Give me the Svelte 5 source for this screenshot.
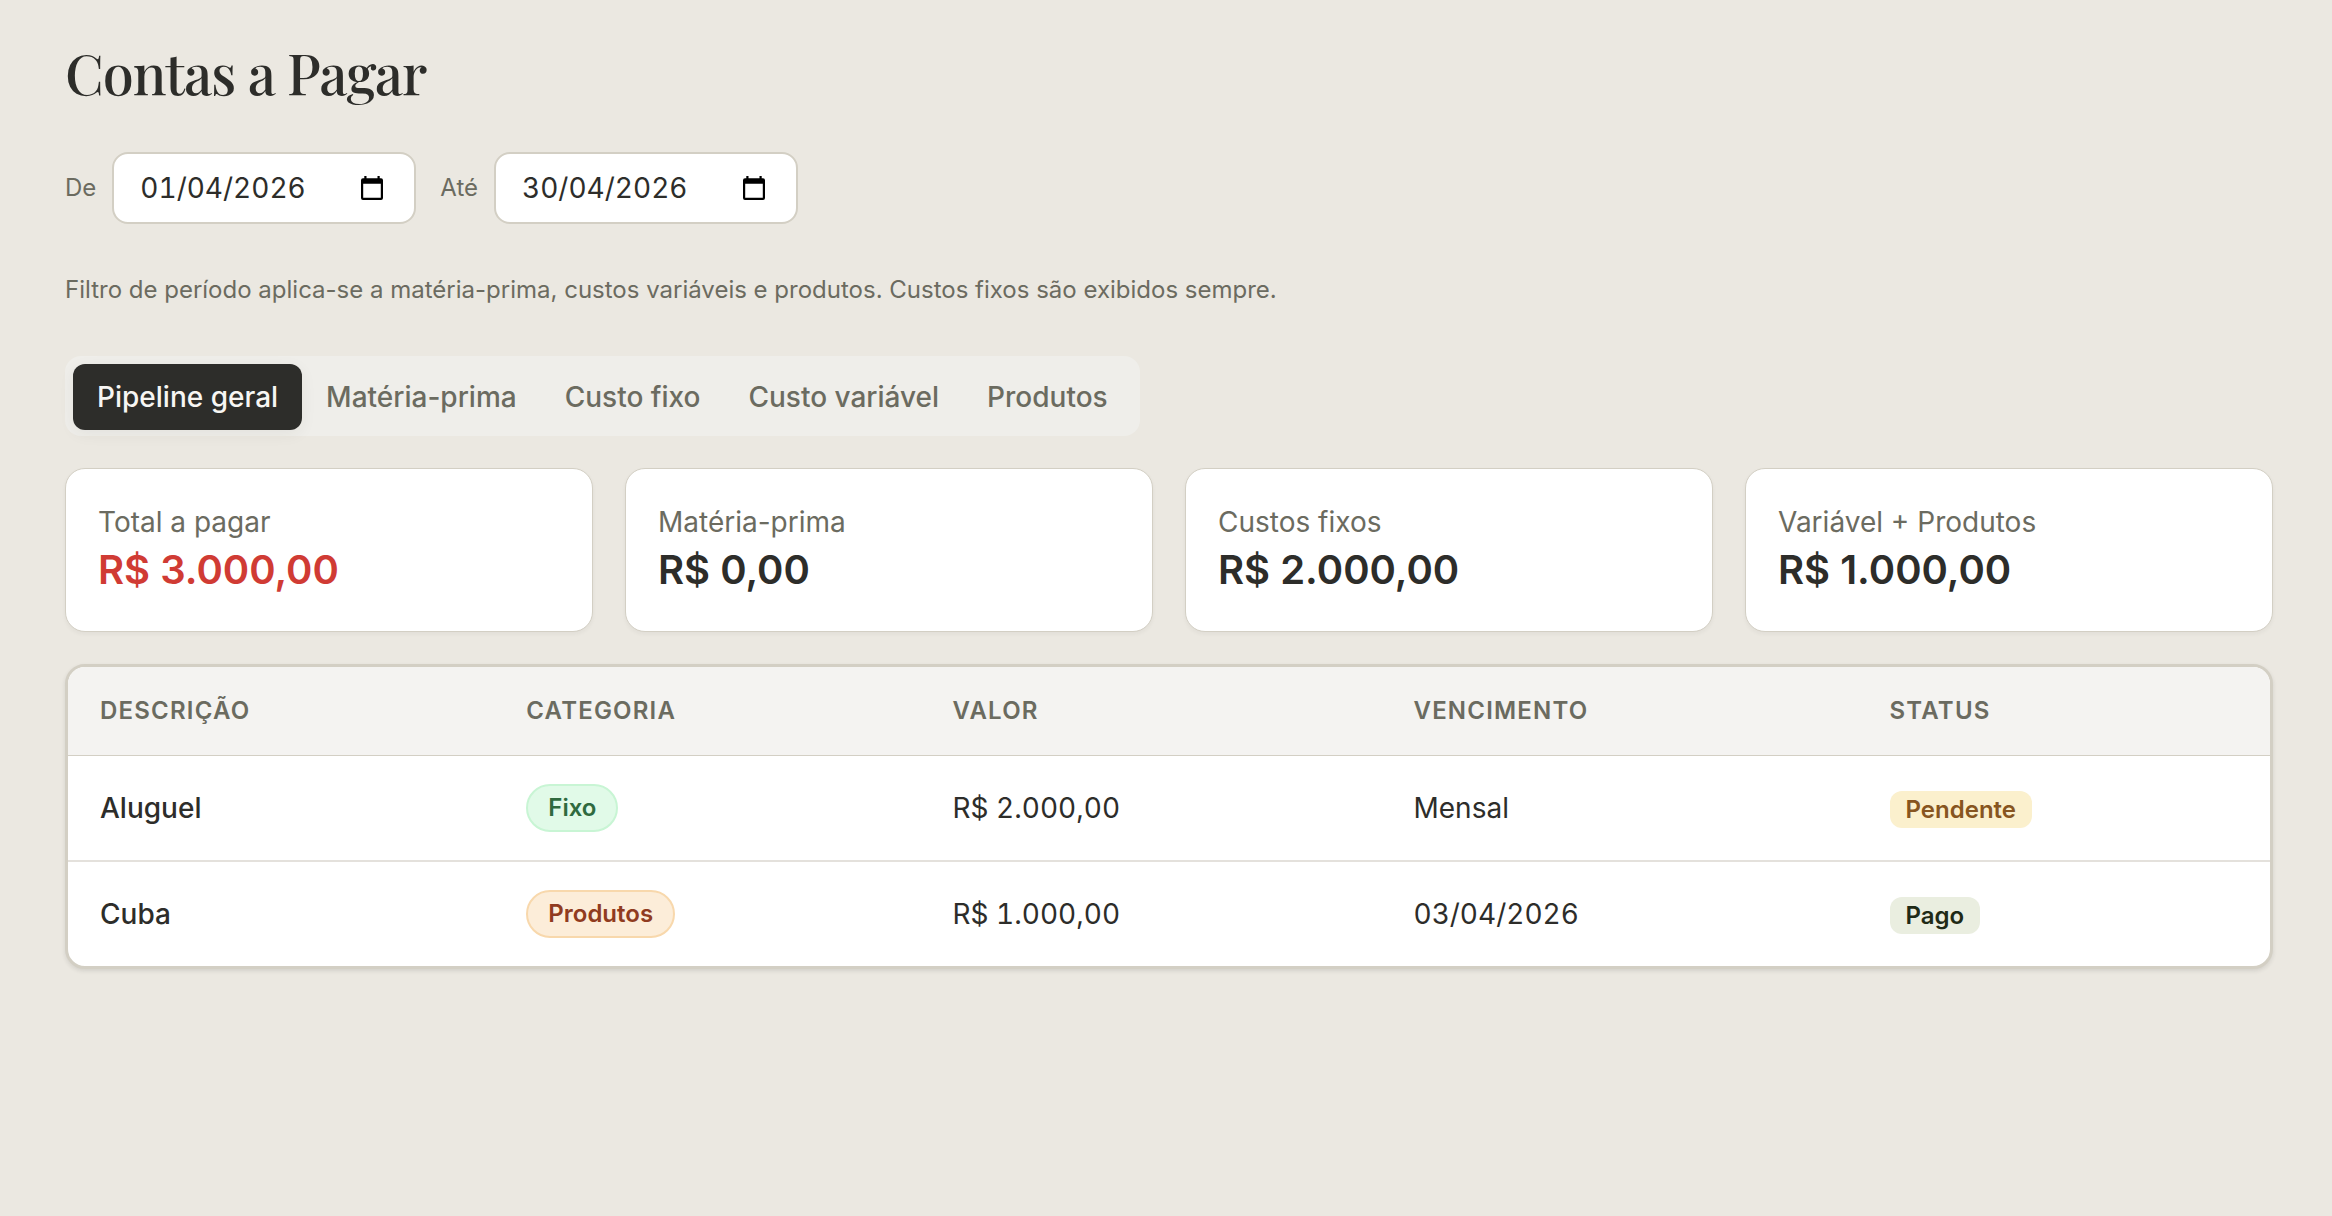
<script lang="ts">
	type Row = {
		description: string;
		category: string;
		categoryClass: string;
		value: string;
		due: string;
		status: string;
		statusClass: string;
	};

	const tabs = [
		"Pipeline geral",
		"Matéria-prima",
		"Custo fixo",
		"Custo variável",
		"Produtos",
	];

	const summary = [
		{ label: "Total a pagar", value: "R$ 3.000,00", danger: true },
		{ label: "Matéria-prima", value: "R$ 0,00", danger: false },
		{ label: "Custos fixos", value: "R$ 2.000,00", danger: false },
		{ label: "Variável + Produtos", value: "R$ 1.000,00", danger: false },
	];

	const rows: Row[] = [
		{
			description: "Aluguel",
			category: "Fixo",
			categoryClass: "fixed",
			value: "R$ 2.000,00",
			due: "Mensal",
			status: "Pendente",
			statusClass: "pending",
		},
		{
			description: "Cuba",
			category: "Produtos",
			categoryClass: "products",
			value: "R$ 1.000,00",
			due: "03/04/2026",
			status: "Pago",
			statusClass: "paid",
		},
	];

	let activeTab = $state("Pipeline geral");
	let from = $state("01/04/2026");
	let to = $state("30/04/2026");
</script>

{#snippet calendarIcon()}
	<svg width="22" height="24" viewBox="0 0 22 24" aria-hidden="true">
		<path
			fill="#000"
			fill-rule="evenodd"
			d="M3.3 0h2.2v2.3h11V0h2.2v2.3H20a2 2 0 0 1 2 2V22a2 2 0 0 1-2 2H2a2 2 0 0 1-2-2V4.300a2 2 0 0 1 2-2h1.300zM2.200 7.700v14.100h17.600V7.700z"
		/>
	</svg>
{/snippet}

<main class="page">
	<h1>Contas a Pagar</h1>

	<div class="period">
		<div class="field">
			<label for="from">De</label>
			<div class="date">
				<input id="from" type="text" inputmode="numeric" bind:value={from} />
				<button type="button" aria-label="Abrir calendário">
					{@render calendarIcon()}
				</button>
			</div>
		</div>
		<div class="field">
			<label for="to">Até</label>
			<div class="date">
				<input id="to" type="text" inputmode="numeric" bind:value={to} />
				<button type="button" aria-label="Abrir calendário">
					{@render calendarIcon()}
				</button>
			</div>
		</div>
	</div>

	<p class="hint">
		Filtro de período aplica-se a matéria-prima, custos variáveis e produtos.
		Custos fixos são exibidos sempre.
	</p>

	<div class="tabs" role="tablist">
		{#each tabs as tab}
			<button
				type="button"
				role="tab"
				class:active={tab === activeTab}
				aria-selected={tab === activeTab}
				onclick={() => (activeTab = tab)}
			>
				{tab}
			</button>
		{/each}
	</div>

	<section class="cards">
		{#each summary as card}
			<div class="card">
				<span class="card-label">{card.label}</span>
				<strong class:danger={card.danger}>{card.value}</strong>
			</div>
		{/each}
	</section>

	<div class="table-wrap">
		<table>
			<thead>
				<tr>
					<th class="col-description">Descrição</th>
					<th class="col-category">Categoria</th>
					<th class="col-value">Valor</th>
					<th class="col-due">Vencimento</th>
					<th class="col-status">Status</th>
				</tr>
			</thead>
			<tbody>
				{#each rows as row}
					<tr>
						<td class="name">{row.description}</td>
						<td><span class="pill {row.categoryClass}">{row.category}</span></td>
						<td class="number">{row.value}</td>
						<td class="number">{row.due}</td>
						<td><span class="status {row.statusClass}">{row.status}</span></td>
					</tr>
				{/each}
			</tbody>
		</table>
	</div>
</main>

<style>
	:global(body) {
		margin: 0;
		background: #ebe8e1;
	}

	.page {
		box-sizing: border-box;
		padding: 36px 59px 40px 65px;
		font-family: Inter, "Liberation Sans", sans-serif;
		font-size: 28px;
		line-height: 40px;
		color: #2d2d2a;
	}

	h1 {
		margin: 0 0 44px;
		font-family: "Playfair Display", "Liberation Serif", serif;
		font-size: 56px;
		line-height: 72px;
		font-weight: 500;
		letter-spacing: -0.02em;
	}

	button,
	input {
		font: inherit;
		color: inherit;
		border: 0;
		margin: 0;
		padding: 0;
		background: none;
	}

	.period {
		display: flex;
		flex-wrap: wrap;
		gap: 24px;
	}

	.field {
		display: flex;
		align-items: center;
		gap: 16px;
	}

	label {
		font-size: 24px;
		line-height: 32px;
		color: #6b6b60;
	}

	.date {
		box-sizing: border-box;
		display: flex;
		align-items: center;
		width: 304px;
		height: 72px;
		padding: 0 31px 0 26px;
		border: 2px solid #d3cfc4;
		border-radius: 16px;
		background: #fff;
	}

	.date input {
		flex: 1;
		min-width: 0;
		font-variant-numeric: tabular-nums;
		outline: none;
	}

	.date button {
		display: flex;
		cursor: pointer;
	}

	.hint {
		margin: 48px 0;
		font-size: 24px;
		line-height: 36px;
		color: #6b6b60;
	}

	.tabs {
		display: flex;
		align-items: flex-start;
		width: fit-content;
		padding: 8px 8px 6px;
		border-radius: 16px;
		background: #efeeea;
	}

	.tabs button {
		padding: 13px 24px;
		border-radius: 12px;
		font-weight: 500;
		color: #6b6b60;
		cursor: pointer;
	}

	.tabs .active {
		background: #2d2d2a;
		color: #f7f6f3;
		box-shadow: 0 4px 16px rgba(45, 45, 42, 0.06);
	}

	.cards {
		display: grid;
		grid-template-columns: repeat(4, 1fr);
		gap: 32px;
		margin: 32px 0;
	}

	.card {
		display: flex;
		flex-direction: column;
		padding: 33px 32px;
		border: 1px solid #d3cfc4;
		border-radius: 20px;
		background: #fff;
		box-shadow: 0 2px 4px rgba(45, 45, 42, 0.05);
	}

	.card-label {
		color: #6b6b60;
	}

	.card strong {
		font-size: 40px;
		line-height: 56px;
		font-weight: 600;
	}

	.card .danger {
		color: #d03b34;
	}

	.table-wrap {
		overflow: hidden;
		border: 3px solid #d3cfc4;
		border-radius: 20px;
		background: #fff;
		box-shadow: 0 2px 4px rgba(45, 45, 42, 0.12);
	}

	table {
		width: 100%;
		table-layout: fixed;
		border-collapse: separate;
		border-spacing: 0;
	}

	th,
	td {
		box-sizing: border-box;
		padding: 0 32px;
		text-align: left;
		vertical-align: middle;
	}

	th {
		height: 89px;
		border-bottom: 1px solid #d3cfc4;
		background: #f4f3f1;
		font-size: 24px;
		line-height: 32px;
		font-weight: 600;
		letter-spacing: 0.05em;
		text-transform: uppercase;
		color: #6b6b60;
	}

	.col-description,
	.col-category {
		width: 19.36%;
	}

	.col-value {
		width: 20.93%;
	}

	.col-due {
		width: 21.62%;
	}

	td {
		height: 104px;
	}

	tbody tr:not(:last-child) td {
		height: 106px;
		border-bottom: 2px solid #e4e1dc;
	}

	.name {
		font-weight: 500;
	}

	.number {
		font-variant-numeric: tabular-nums;
	}

	.pill,
	.status {
		display: inline-block;
		vertical-align: middle;
		font-size: 24px;
		font-weight: 600;
	}

	.pill {
		padding: 6px 20px;
		border: 2px solid;
		border-radius: 24px;
		line-height: 32px;
	}

	.fixed {
		border-color: #c8f5d4;
		background: #e1fae8;
		color: #2f6a3f;
	}

	.products {
		border-color: #f8d8ac;
		background: #fcedd9;
		color: #903b20;
	}

	.status {
		padding: 4px 16px;
		border-radius: 12px;
		line-height: 29px;
	}

	.pending {
		background: #fbf0cd;
		color: #875520;
	}

	.paid {
		background: #eaeee0;
		color: #1f2a16;
	}
</style>
